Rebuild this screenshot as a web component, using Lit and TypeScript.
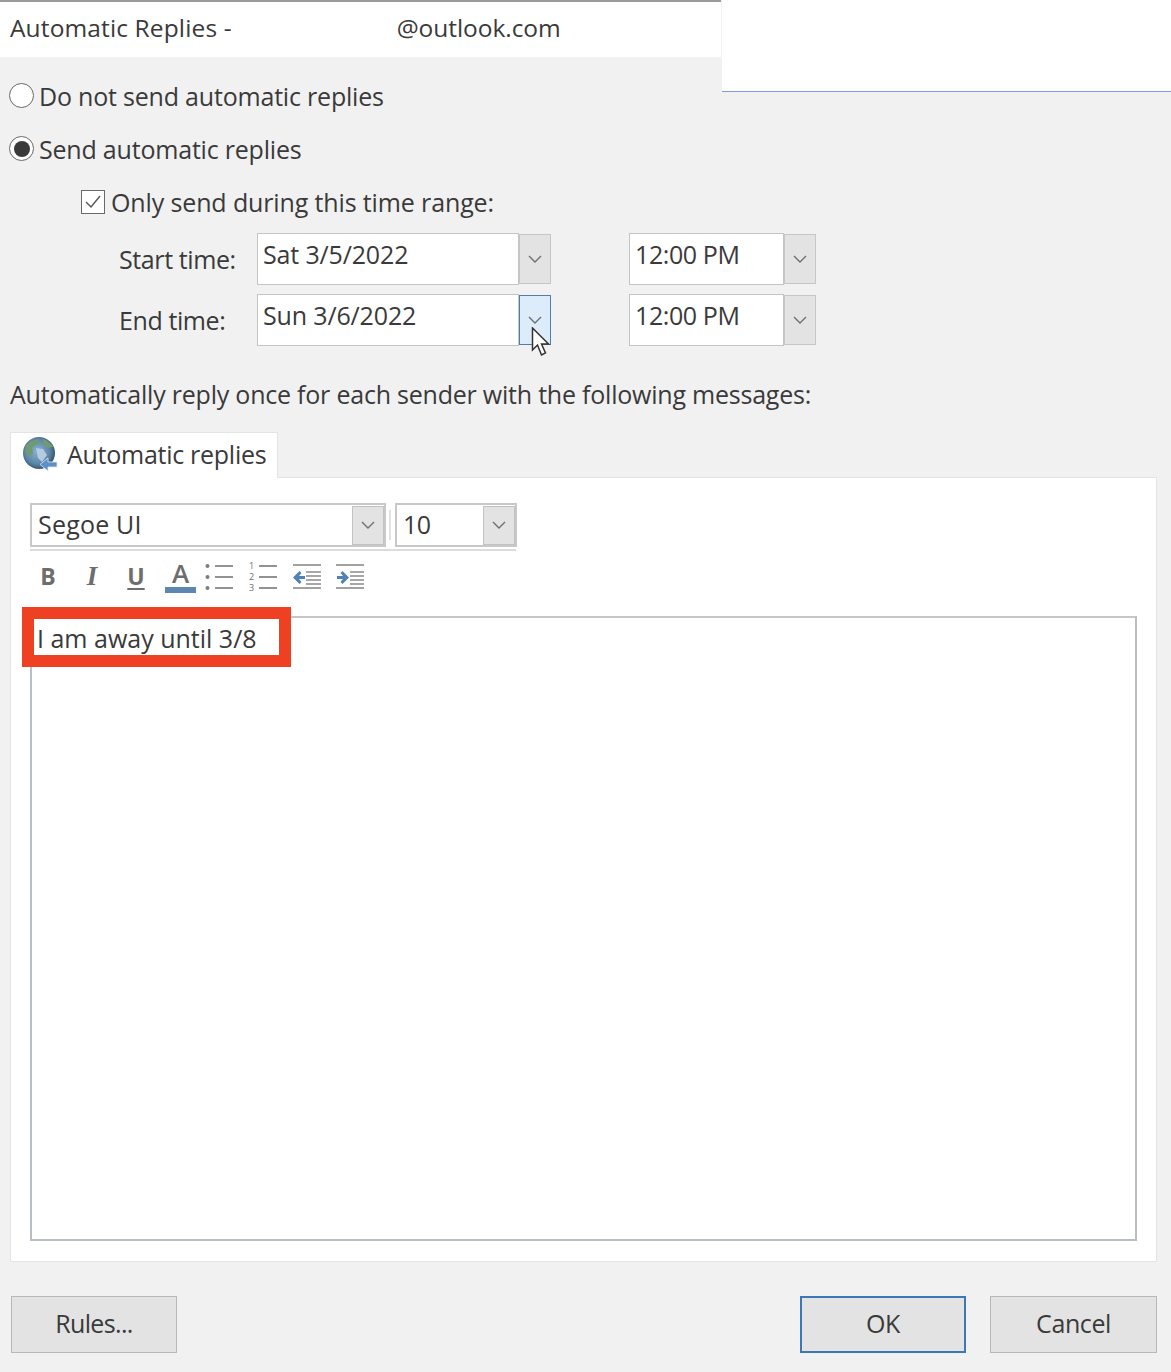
import { LitElement, html, css, svg } from "lit";
import { customElement } from "lit/decorators.js";

const chev = html`<svg class="chev" width="14" height="8" viewBox="0 0 14 8"><path d="M1 1l6 6 6-6" fill="none" stroke="#6f6f6f" stroke-width="1.4"/></svg>`;

@customElement("app-root")
export class AppRoot extends LitElement {
  static styles = css`
    :host { display: block; width: 1171px; height: 1372px; overflow: hidden; background: #f1f1f1; color: #3a3a3a; font-family: "Open Sans", "Noto Sans", sans-serif; font-size: 25px; position: relative; }
    .top { display: flex; height: 57px; }
    .title { width: 721px; box-sizing: border-box; background: #fff; border-top: 2px solid #9a9a9a; padding: 0 0 4px 10px; display: flex; align-items: center; height: 57px; font-size: 24.5px; letter-spacing: 0.13px; }
    .title .mail { margin-left: 165px; letter-spacing: -0.05px; }
    .corner { flex: 1; height: 92px; box-sizing: border-box; background: #fff; border-bottom: 1px solid #7f9ae0; margin-left: 1px; }
    .opts { padding: 0 0 0 9px; }
    .row { display: flex; align-items: center; height: 53px; letter-spacing: -0.2px; white-space: nowrap; }
    .r1 { margin-top: 12px; }
    .row.c { letter-spacing: -0.13px; }
    .radio { width: 25px; height: 25px; box-sizing: border-box; border: 1.5px solid #6a6a6a; border-radius: 50%; background: #fff; margin-right: 5px; display: flex; align-items: center; justify-content: center; }
    .radio.on i { display: block; width: 16px; height: 16px; border-radius: 50%; background: #3a3a3a; }
    .check { margin-left: 72px; width: 24px; height: 24px; box-sizing: border-box; border: 1.5px solid #6a6a6a; background: #fff; margin-right: 6px; display: flex; align-items: center; justify-content: center; }
    .times { padding-left: 119px; margin-top: 5px; display: grid; grid-template-columns: 138px 262px 32px 78px 155px 33px; grid-auto-rows: 52px; row-gap: 9px; align-items: stretch; letter-spacing: -0.15px; }
    .lbl { display: flex; align-items: center; padding-bottom: 1px; letter-spacing: -0.4px; }
    .field { background: #fff; border: 1.5px solid #c4c4c4; box-sizing: border-box; padding: 0 0 10px 5px; display: flex; align-items: center; }
    .field.tm { padding-left: 5px; letter-spacing: -0.4px; }
    .btn { margin: 1px 0 0 0; box-sizing: border-box; width: 32px; height: 50px; background: #e3e3e3; border: 1.5px solid #c6c6c6; display: flex; align-items: center; justify-content: center; }
    .btn.hot { background: #dcecfa; border-color: #4f7fa8; }
    .gap { grid-column: 4; }
    .msg { padding-left: 10px; height: 30px; margin-top: 33px; display: flex; align-items: center; letter-spacing: -0.22px; white-space: nowrap; }
    .tabs { margin: 23px 0 0 10px; width: 268px; height: 46px; box-sizing: border-box; background: #fff; border: 1px solid #e4e4e4; border-bottom: none; display: flex; align-items: center; padding: 0 0 4px 11px; gap: 9px; letter-spacing: -0.27px; position: relative; z-index: 1; }
    .panel { margin: -1px 14px 0 10px; height: 785px; box-sizing: border-box; background: #fff; border: 1px solid #e4e4e4; padding: 25px 19px 20px 19px; display: flex; flex-direction: column; }
    .fonts { display: flex; align-items: stretch; height: 44px; }
    .sel { height: 44px; box-sizing: border-box; border: 2px solid #c8c8c8; background: #fff; display: flex; align-items: center; justify-content: space-between; padding: 0 0 0 6px; letter-spacing: 0.2px; }
    .sel span { padding-bottom: 2px; }
    .sel.f { width: 356px; }
    .sel.s { width: 122px; padding-left: 6px; letter-spacing: -0.6px; }
    .sb { width: 32px; height: 39px; background: #e3e3e3; border: 1.5px solid #c2c2c2; box-sizing: border-box; display: flex; align-items: center; justify-content: center; }
    .sep { width: 2px; height: 30px; background: #e2e2e2; margin: 7px 4px 0 3px; }
    .rule { height: 2px; width: 486px; background: #dcdcdc; margin-top: 2px; }
    .tools { display: flex; align-items: center; height: 48px; margin-top: 2px; }
    .tools svg { display: block; flex: none; }
    .tb { width: 44px; text-align: center; color: #6d6d6d; font-size: 23px; font-weight: 700; line-height: 1; flex: none; }
    .tb.first { margin-left: -4px; }
    .i { font-family: "Liberation Serif", serif; font-style: italic; font-size: 27px; }
    .u { text-decoration: underline; text-underline-offset: 3px; text-decoration-thickness: 2px; }
    .color { width: 31px; margin: 0 9px 0 7px; display: flex; flex-direction: column; align-items: center; gap: 2px; color: #6d6d6d; font-size: 26px; font-weight: 600; line-height: 24px; }
    .color i { display: block; width: 100%; height: 6px; background: #5d86b0; }
    .g13 { width: 13px; } .g15 { width: 15px; }
    .editor { margin-top: 15px; width: 1107px; height: 626px; box-sizing: border-box; background: #fff; border: 2px solid #b9bec5; border-top-color: #c6c6c6; padding: 3px 0 0 5px; font-size: 25px; line-height: 34px; position: relative; }
    .hl { position: absolute; left: -10px; top: -11px; width: 269px; height: 60px; box-sizing: border-box; border: 12px solid #ee4023; pointer-events: none; }
    .foot { display: flex; padding: 34px 14px 0 11px; }
    .push { flex: 1; }
    .b { width: 166px; height: 57px; box-sizing: border-box; background: #e3e3e3; border: 1.5px solid #b8b8b8; display: flex; align-items: center; justify-content: center; letter-spacing: -0.4px; padding-bottom: 4px; }
    .b.rules { letter-spacing: -0.65px; }
    .b.def { border: 2.5px solid #3d78b5; margin-right: 24px; }
    .b.cancel { width: 167px; }
    .cursor { position: absolute; left: 531px; top: 327px; }
  `;

  private globe() {
    return html`<svg width="36" height="36" viewBox="0 0 36 36">
      <defs><radialGradient id="g" cx="45%" cy="45%" r="60%"><stop offset="0" stop-color="#8db0d2"/><stop offset=".65" stop-color="#5c86a8"/><stop offset="1" stop-color="#2f4a5e"/></radialGradient></defs>
      <circle cx="17" cy="17" r="16" fill="url(#g)"/>
      <path d="M4 10c4-5 9-7 13-6l-1 4-6 3 1 6-4 4-4-5zM21 3c4 1 8 4 10 8l-6 1-4-4z" fill="#6f9a72"/>
      <path d="M14 12l7 1 4 6-5 7-4-4z" fill="#b4cbe2"/>
      <path d="M35 26h-9v-4l-8 6.500 8 6.500v-4h9z" fill="#5b90c8" stroke="#dfe9f3" stroke-width=".8"/>
    </svg>`;
  }

  private listIcon(numbered: boolean) {
    const ys = [5, 16, 27];
    return html`<svg width="30" height="36" viewBox="0 -2 30 36">
      ${ys.map((y, i) => svg`<line x1=${numbered ? 11 : 10} x2=${numbered ? 29 : 28} y1=${y} y2=${y} stroke="#777" stroke-width="1.6"/>
        ${numbered
          ? svg`<text x="1" y=${y + 3} font-size="9" fill="#6d6d6d" font-family="Open Sans">${i + 1}</text>`
          : svg`<circle cx="2.500" cy=${y} r="2" fill="#7d7d7d"/>`}`)}
    </svg>`;
  }

  private indentIcon(out: boolean) {
    const mids = [8, 12, 16, 20];
    const x1 = out ? 13 : 14;
    return html`<svg width="28" height="32" viewBox="0 0 28 32">
      <line x1="0" x2="28" y1="4" y2="4" stroke="#8a8a8a" stroke-width="1.6"/>
      <line x1="0" x2="28" y1="27" y2="27" stroke="#8a8a8a" stroke-width="1.6"/>
      ${mids.map((y) => svg`<line x1=${x1} x2="28" y1=${y + 3} y2=${y + 3} stroke="#8a8a8a" stroke-width="1.5"/>`)}
      ${out
        ? svg`<path d="M0 16.500l6.500-6.500 2 2-2.500 3h6v3H6l2.500 3-2 2z" fill="#4f83b5"/>`
        : svg`<path d="M13 16.500l-6.500-6.500-2 2 2.500 3H1v3h6l-2.500 3 2 2z" fill="#4f83b5"/>`}
    </svg>`;
  }

  render() {
    return html`
      <div class="top">
        <div class="title"><span>Automatic Replies -</span><span class="mail">@outlook.com</span></div>
        <div class="corner"></div>
      </div>
      <div class="opts">
        <div class="row r1"><span class="radio"></span>Do not send automatic replies</div>
        <div class="row"><span class="radio on"><i></i></span>Send automatic replies</div>
        <div class="row c"><span class="check"><svg width="18" height="16" viewBox="0 0 18 16"><path d="M2 8l5 5 9-11" fill="none" stroke="#555" stroke-width="1.4"/></svg></span>Only send during this time range:</div>
      </div>
      <div class="times">
        <div class="lbl">Start time:</div>
        <div class="field">Sat 3/5/2022</div>
        <div class="btn">${chev}</div>
        <div class="gap"></div>
        <div class="field tm">12:00 PM</div>
        <div class="btn">${chev}</div>
        <div class="lbl">End time:</div>
        <div class="field">Sun 3/6/2022</div>
        <div class="btn hot">${chev}</div>
        <div class="gap"></div>
        <div class="field tm">12:00 PM</div>
        <div class="btn">${chev}</div>
      </div>
      <div class="msg">Automatically reply once for each sender with the following messages:</div>
      <div class="tabs">${this.globe()}<span>Automatic replies</span></div>
      <div class="panel">
        <div class="fonts">
          <div class="sel f"><span>Segoe UI</span><div class="sb">${chev}</div></div>
          <div class="sep"></div>
          <div class="sel s"><span>10</span><div class="sb">${chev}</div></div>
        </div>
        <div class="rule"></div>
        <div class="tools">
          <div class="tb first">B</div>
          <div class="tb i">I</div>
          <div class="tb u">U</div>
          <div class="color"><span>A</span><i></i></div>
          ${this.listIcon(false)}
          <div class="g13"></div>
          ${this.listIcon(true)}
          <div class="g15"></div>
          ${this.indentIcon(true)}
          <div class="g15"></div>
          ${this.indentIcon(false)}
        </div>
        <div class="editor">I am away until 3/8<div class="hl"></div></div>
      </div>
      <div class="foot">
        <div class="b rules">Rules...</div>
        <div class="push"></div>
        <div class="b def">OK</div>
        <div class="b cancel">Cancel</div>
      </div>
      <svg class="cursor" width="20" height="30" viewBox="0 0 20 30"><path d="M1.500 1v22l5-5 4 10 4-2-4-9h7z" fill="#fff" stroke="#333" stroke-width="1.5"/></svg>
    `;
  }
}
